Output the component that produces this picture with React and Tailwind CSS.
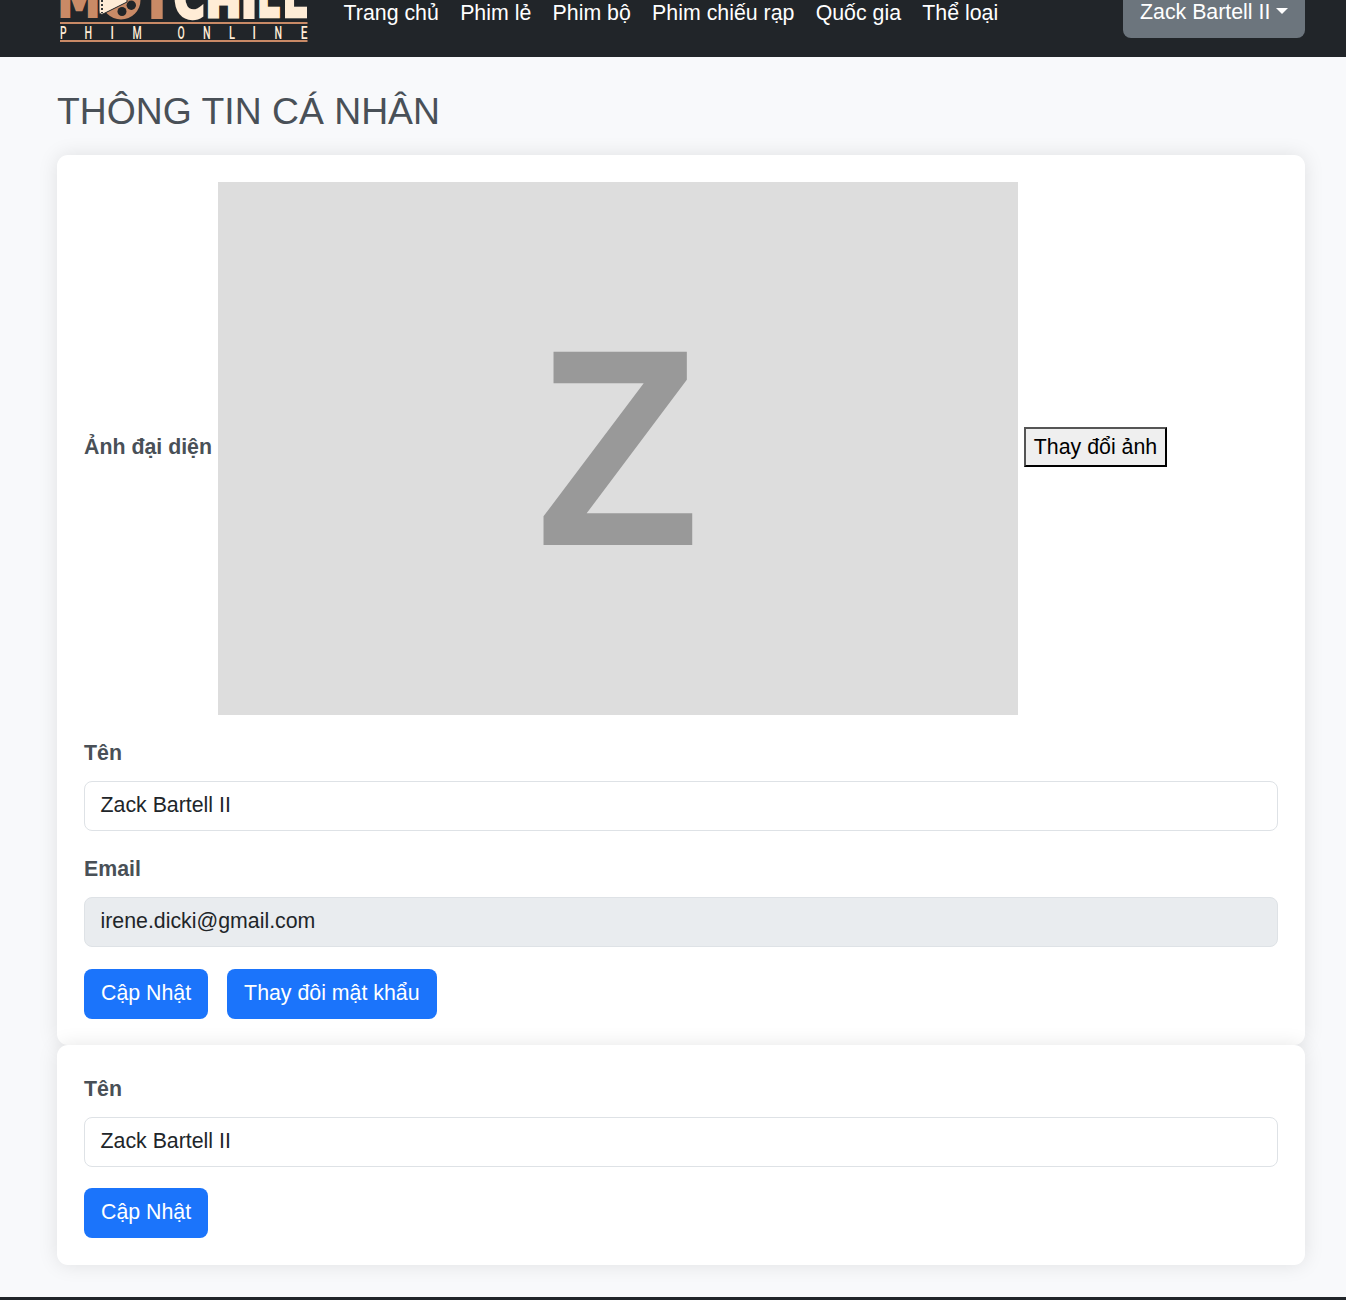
const NAV = ['Trang chủ', 'Phim lẻ', 'Phim bộ', 'Phim chiếu rạp', 'Quốc gia', 'Thể loại'];

// [letter, x, advance, font size, stroke, colour]
const LETTERS = [
  ['M', 57.5, 43, 49, 2.2, '#c98a66'],
  ['T', 140, 34, 51, 2, '#c98a66'],
  ['C', 173.8, 31, 56, 3.4, '#ffecd6'],
  ['H', 205.4, 36, 43, 3, '#ffecd6'],
  ['I', 240.1, 18, 51, 2, '#ffecd6'],
  ['L', 256.7, 23.3, 62, 2.6, '#ffecd6'],
  ['L', 282.2, 25, 62, 2.6, '#ffecd6'],
];

const TAG = [['P', 60, 6.6], ['H', 84.5, 7.6], ['I', 110.5, 3.4], ['M', 132.5, 9.2], ['O', 177.5, 7.2], ['N', 203, 7.6], ['L', 229, 6], ['I', 252.5, 3.4], ['N', 274.5, 7.6], ['E', 300.7, 6.8]];

function Logo() {
  return (
    <svg width="252" height="57" viewBox="58 0 252 57" className="shrink-0">
      {LETTERS.map(([c, x, w, size, stroke, fill], i) => (
        <text key={i} x={x} y={18.5 - stroke / 2} fontFamily="DejaVu Sans" fontWeight="700" fontSize={size} fill={fill} stroke={fill} strokeWidth={stroke} textLength={w} lengthAdjust="spacingAndGlyphs">{c}</text>
      ))}
      <circle cx="121" cy="0" r="19.5" fill="#c98a66" />
      <circle cx="122" cy="11.500" r="4.500" fill="#212529" />
      <circle cx="131.300" cy="5.200" r="4.700" fill="#212529" />
      <path d="M99 -2H127V2L103 14Q99 15 99 11Z" fill="#ffecd6" stroke="#212529" />
      <path d="M102 0V13" stroke="#212529" strokeWidth="1.800" strokeDasharray="2 2" />
      <path d="M60 23H307.500M60 41H307.500" stroke="#c98a66" strokeWidth="1.800" />
      {TAG.map(([c, x, w], i) => (
        <text key={i} x={x} y="38.500" fontFamily="Roboto" fontWeight="500" fontSize="18.300" fill="#ffecd6" textLength={w} lengthAdjust="spacingAndGlyphs">{c}</text>
      ))}
    </svg>
  );
}

function Field({ label, value, disabled }) {
  return (
    <div className="mb-[21px]">
      <label className="mb-[11px] block h-[34px] font-bold leading-[34px] text-[#495057]">{label}</label>
      <div className={`h-[50px] rounded-lg border border-[#dee2e6] px-[15.5px] leading-[46px] text-[#212529] ${disabled ? 'bg-[#e9ecef]' : 'bg-white'}`}>{value}</div>
    </div>
  );
}

function Button({ children }) {
  return <button className="h-[50px] rounded-lg bg-[#1b74fb] px-[17px] pb-0.5 text-white">{children}</button>;
}

export default function App() {
  return (
    <div className="h-[1300px] overflow-hidden bg-[#f8f9fb] font-['Liberation_Sans',Arial,sans-serif] text-[21.333px] leading-8">
      <header className="flex h-[57px] items-start overflow-hidden bg-[#212529] pl-[58px] pr-[41px] text-white">
        <Logo />
        <nav className="-mt-[3px] ml-[33.6px] flex gap-[21.3px]">
          {NAV.map((n) => <a key={n} className="whitespace-nowrap">{n}</a>)}
        </nav>
        <button className="-mt-3 ml-auto flex h-[50px] w-[182px] items-center rounded-lg bg-[#6c757d] pb-0.5 pl-[17px]">
          <span className="whitespace-nowrap">Zack Bartell II</span>
          <span className="-mt-0.5 ml-[6px] border-x-[6.4px] border-t-[6.4px] border-x-transparent border-t-white" />
        </button>
      </header>
      <main className="pl-[57px] pr-[41px]">
        <h1 className="flex h-[98px] items-center pt-[9px] text-[37.33px] text-[#495057]">THÔNG TIN CÁ NHÂN</h1>
        <section className="h-[890px] rounded-[11px] bg-white p-[27px] shadow-[0_0_20px_rgba(0,0,0,0.1)]">
          <div className="mb-[21px] flex h-[533px] items-center">
            <label className="w-[134px] whitespace-nowrap pb-[3px] font-bold text-[#495057]">Ảnh đại diện</label>
            <svg width="800" height="533" className="shrink-0 bg-[#ddd]">
              <text x="317.500" y="363" fontFamily="Liberation Sans" fontWeight="700" fontSize="281" fill="#999" textLength="164.500" lengthAdjust="spacingAndGlyphs">Z</text>
            </svg>
            <button className="-mt-1 ml-1.5 h-10 w-[143px] whitespace-nowrap border-2 border-t-[#555] border-l-[#555] border-b-black border-r-black bg-[#efefef] text-black">Thay đổi ảnh</button>
          </div>
          <Field label="Tên" value="Zack Bartell II" />
          <Field label="Email" value="irene.dicki@gmail.com" disabled />
          <div className="mt-[22px] flex gap-[19px]">
            <Button>Cập Nhật</Button>
            <Button>Thay đôi mật khẩu</Button>
          </div>
        </section>
        <section className="relative h-[220px] rounded-[11px] bg-white p-[27px] shadow-[0_0_20px_rgba(0,0,0,0.1)]">
          <Field label="Tên" value="Zack Bartell II" />
          <Button>Cập Nhật</Button>
        </section>
      </main>
      <footer className="mt-8 h-3 bg-[#212529]" />
    </div>
  );
}
